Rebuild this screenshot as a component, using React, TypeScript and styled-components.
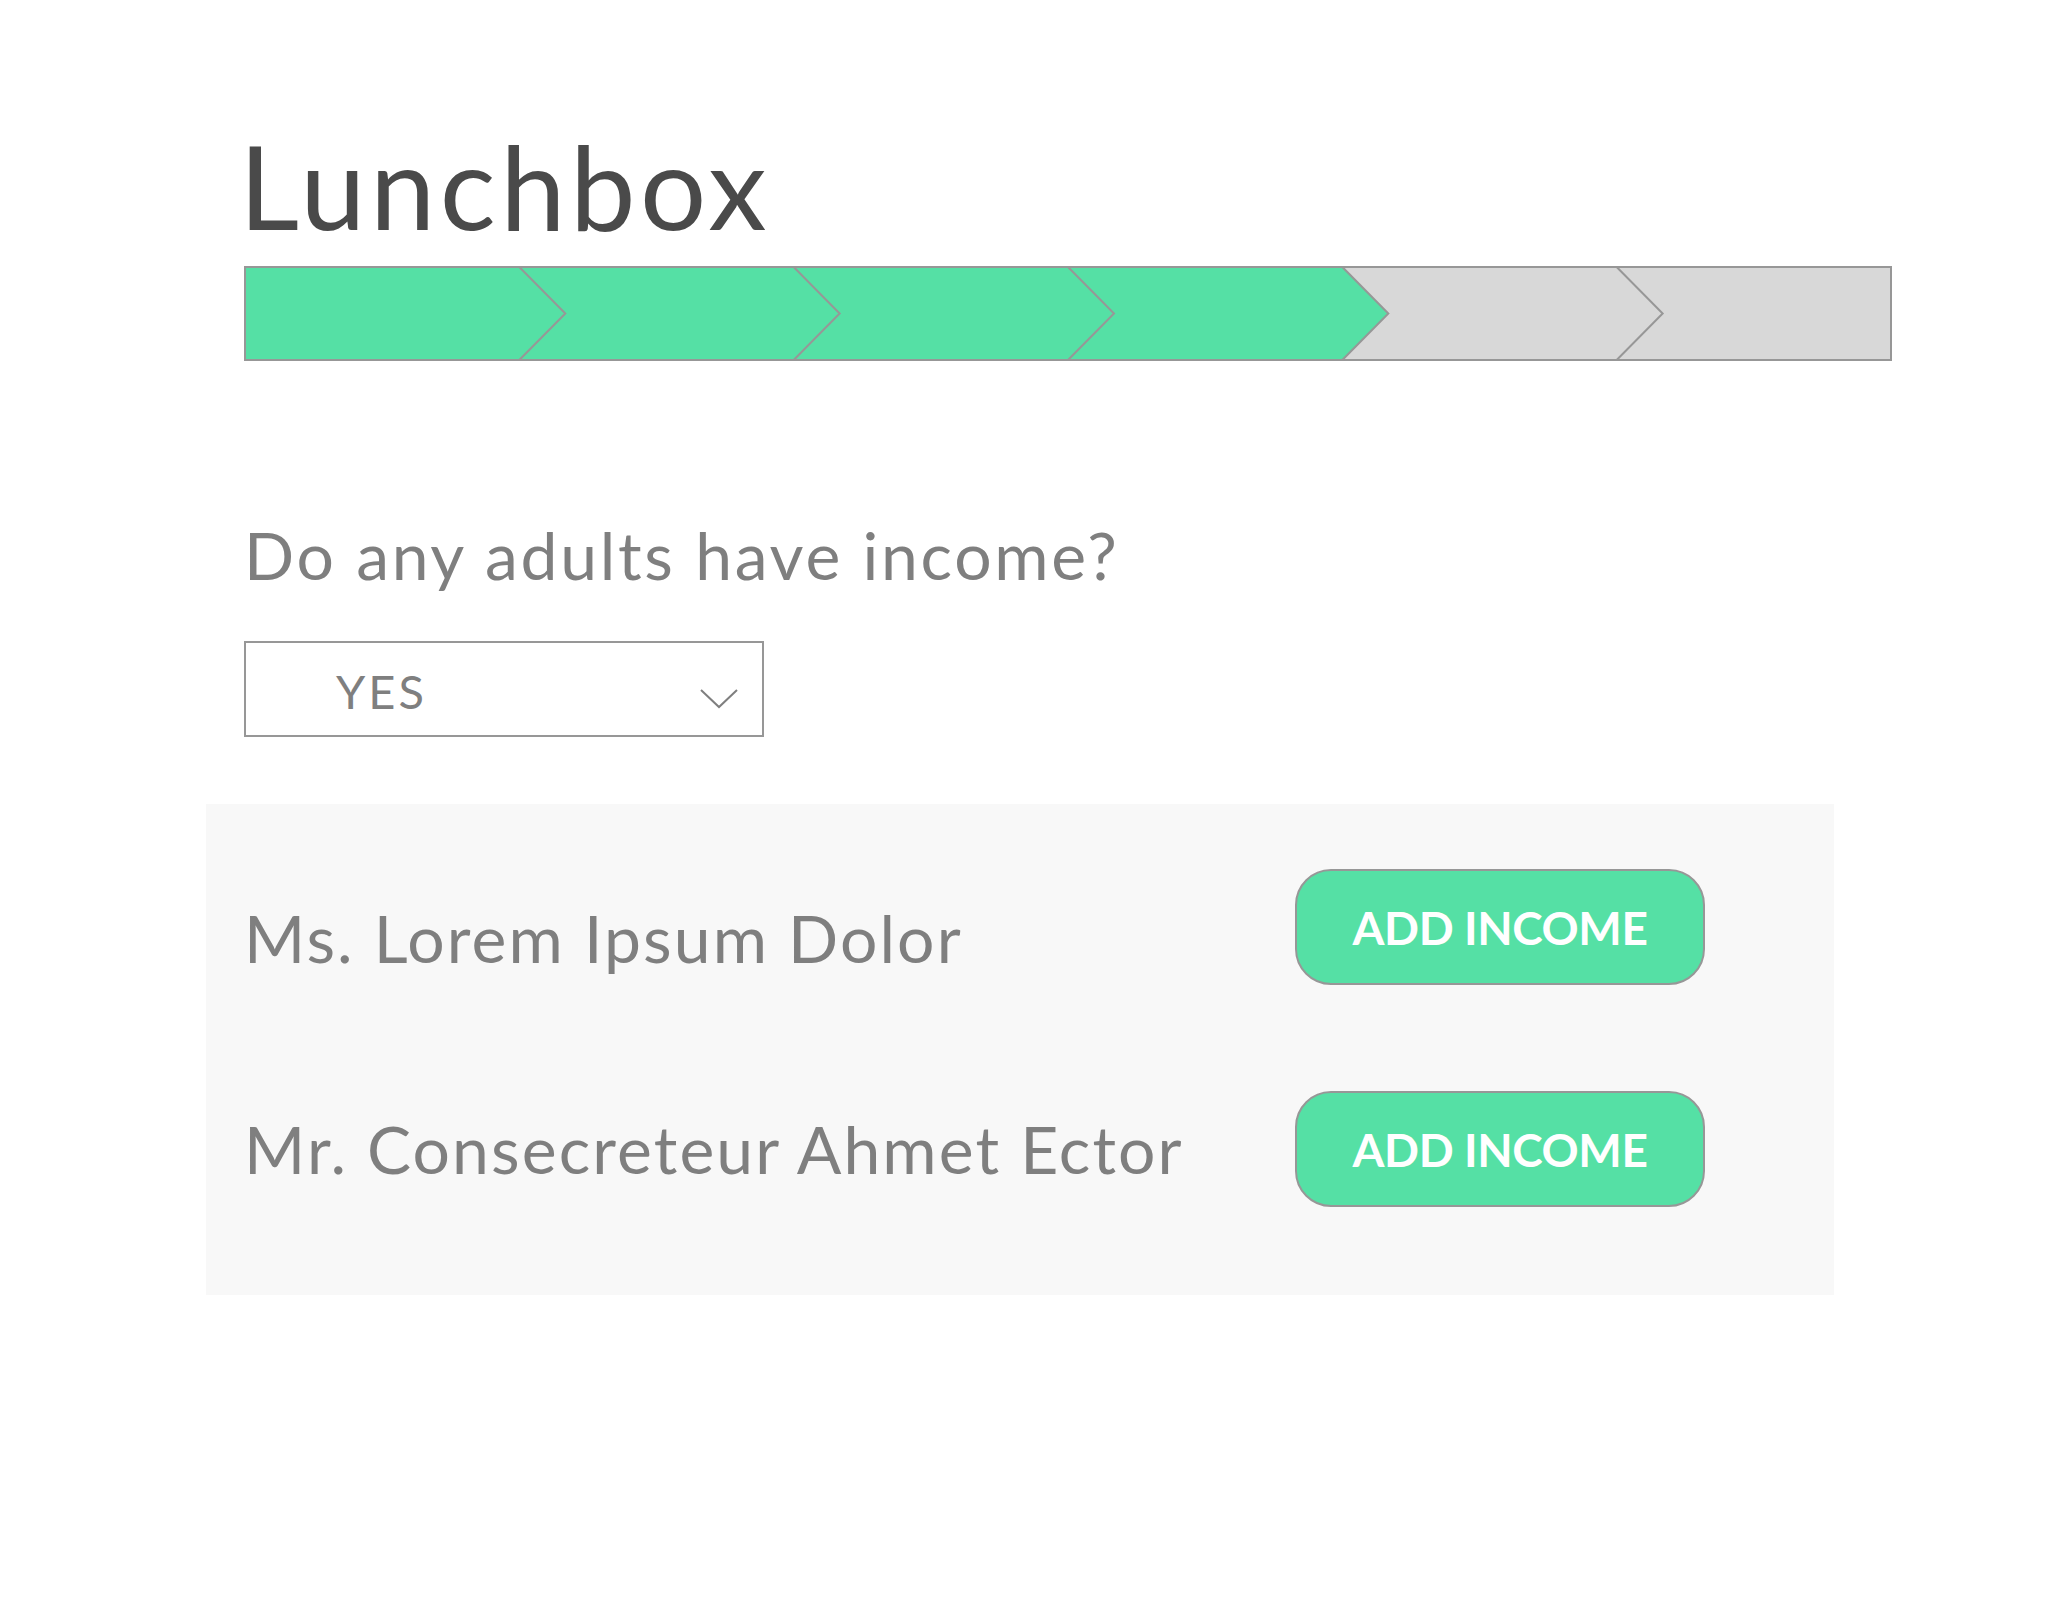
import React from "react";
import styled, { createGlobalStyle } from "styled-components";

const GREEN = "#55E0A5";
const GRAY_FILL = "#D8D8D8";
const LINE = "#979797";
const TEXT = "#7F7F7F";

const GlobalStyle = createGlobalStyle`
  html, body {
    margin: 0;
    padding: 0;
    background: #ffffff;
  }
  body {
    font-family: Lato, "Open Sans", Arial, sans-serif;
    -webkit-font-smoothing: antialiased;
  }
  * { box-sizing: border-box; }
`;

const Page = styled.div`
  width: 2048px;
  min-height: 1606px;
  padding: 127px 0 0 206px;
  display: flex;
  flex-direction: column;
`;

const Header = styled.section`
  padding-left: 38px;
  display: flex;
  flex-direction: column;
`;

const Title = styled.h1`
  margin: 0 0 0 -5px;
  font-family: Lato, sans-serif;
  font-weight: 400;
  font-size: 117px;
  line-height: 116px;
  color: #4a4a4a;
  letter-spacing: 4.5px;
`;

const StepBar = styled.svg`
  display: block;
  margin-top: 23px;
  width: 1648px;
  height: 95px;
`;

const Question = styled.h2`
  margin: 161px 0 0 0;
  font-family: Lato, sans-serif;
  font-weight: 400;
  font-size: 66px;
  line-height: 66px;
  letter-spacing: 2.7px;
  color: ${TEXT};
`;

const Select = styled.div`
  margin-top: 53px;
  width: 520px;
  height: 96px;
  border: 2px solid ${LINE};
  display: flex;
  align-items: center;
  padding-left: 90px;
  padding-right: 24px;
  background: #fff;
`;

const SelectValue = styled.span`
  font-family: Lato, sans-serif;
  font-weight: 400;
  font-size: 47px;
  line-height: 47px;
  letter-spacing: 3px;
  padding-top: 5px;
  color: ${TEXT};
`;

const Caret = styled.svg`
  margin-left: auto;
  margin-top: 20px;
  width: 38px;
  height: 20px;
`;

const Panel = styled.section`
  margin-top: 67px;
  width: 1628px;
  background: #f8f8f8;
  padding: 65px 129px 88px 38px;
  display: flex;
  flex-direction: column;
  gap: 106px;
`;

const Row = styled.div`
  display: grid;
  grid-template-columns: 1fr 410px;
  align-items: center;
`;

const Name = styled.span<{ $drop?: number }>`
  font-family: Lato, sans-serif;
  font-weight: 400;
  font-size: 66px;
  line-height: 66px;
  letter-spacing: 2.1px;
  color: ${TEXT};
  padding-top: ${(p) => p.$drop ?? 0}px;
`;

const AddButton = styled.button`
  height: 116px;
  width: 410px;
  border: 2px solid ${LINE};
  border-radius: 36px;
  background: ${GREEN};
  color: #ffffff;
  font-family: Lato, sans-serif;
  font-weight: 700;
  font-size: 46px;
  line-height: 46px;
  letter-spacing: -0.4px;
  padding: 2px 0 0 0;
  cursor: pointer;
`;

const W = 1648;
const H = 95;
const STEPS = 6;
const DONE = 4;
const D = 46;

function Steps() {
  const w = (W - 2) / STEPS;
  const top = 1;
  const bot = H - 1;
  const mid = H / 2;
  const polys = Array.from({ length: STEPS }, (_, i) => {
    const x0 = 1 + i * w;
    const x1 = 1 + (i + 1) * w;
    const pts: string[] = [];
    pts.push(`${x0},${top}`);
    if (i === STEPS - 1) {
      pts.push(`${W - 1},${top}`, `${W - 1},${bot}`);
    } else {
      pts.push(`${x1},${top}`, `${x1 + D},${mid}`, `${x1},${bot}`);
    }
    pts.push(`${x0},${bot}`);
    if (i !== 0) pts.push(`${x0 + D},${mid}`);
    return (
      <polygon
        key={i}
        points={pts.join(" ")}
        fill={i < DONE ? GREEN : GRAY_FILL}
      />
    );
  });
  const lines = Array.from({ length: STEPS - 1 }, (_, i) => {
    const x1 = 1 + (i + 1) * w;
    return (
      <polyline
        key={i}
        points={`${x1},${top} ${x1 + D},${mid} ${x1},${bot}`}
        fill="none"
        stroke={LINE}
        strokeWidth={2}
      />
    );
  });
  return (
    <StepBar viewBox={`0 0 ${W} ${H}`}>
      {polys}
      {lines}
      <rect x={1} y={1} width={W - 2} height={H - 2} fill="none" stroke={LINE} strokeWidth={2} />
    </StepBar>
  );
}

const adults = [
  { name: "Ms. Lorem Ipsum Dolor", drop: 22 },
  { name: "Mr. Consecreteur Ahmet Ector", drop: 0 },
];

export default function App() {
  return (
    <>
      <GlobalStyle />
      <Page>
        <Header>
          <Title>Lunchbox</Title>
          <Steps />
          <Question>Do any adults have income?</Question>
          <Select>
            <SelectValue>YES</SelectValue>
            <Caret viewBox="0 0 38 20">
              <polyline points="1,1 19,18 37,1" fill="none" stroke={TEXT} strokeWidth={2} />
            </Caret>
          </Select>
        </Header>
        <Panel>
          {adults.map((a) => (
            <Row key={a.name}>
              <Name $drop={a.drop}>{a.name}</Name>
              <AddButton>ADD INCOME</AddButton>
            </Row>
          ))}
        </Panel>
      </Page>
    </>
  );
}
